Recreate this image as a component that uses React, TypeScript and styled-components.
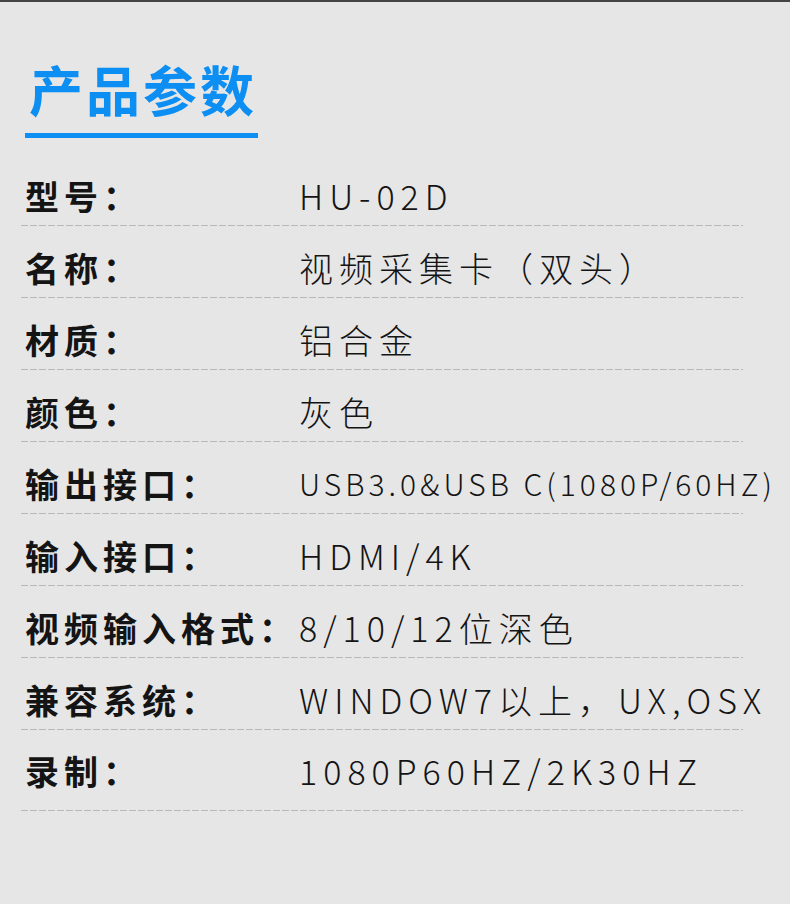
import React from "react";
import styled, { createGlobalStyle } from "styled-components";

const Global = createGlobalStyle`
  html, body { margin: 0; padding: 0; background: #e6e6e6; }
  body { font-family: "Noto Sans CJK SC", "Noto Sans", sans-serif; }
`;

const Page = styled.div`
  width: 790px;
  height: 904px;
  box-sizing: border-box;
  border-top: 2px solid #444;
  background: #e6e6e6;
  overflow: hidden;
`;

const Header = styled.header`
  padding: 57px 0 0 25px;
  display: flex;
  flex-direction: column;
  align-items: flex-start;
`;

const Title = styled.h1`
  margin: 0 0 0 4px;
  font-size: 54px;
  line-height: 60px;
  font-weight: 700;
  letter-spacing: 3px;
  color: #0c8ef2;
`;

const TitleBar = styled.div`
  margin-top: 14px;
  width: 233px;
  height: 5px;
  background: #0c8ef2;
`;

const List = styled.dl`
  margin: 16px 0 0 21px;
  width: 722px;
  padding: 0;
`;

const Row = styled.div`
  display: flex;
  align-items: center;
  height: 72px;
  box-sizing: border-box;
  padding-top: 10px;
  background-image: repeating-linear-gradient(
    90deg,
    #b9b9b9 0 7px,
    transparent 7px 9px
  );
  background-size: 100% 1px;
  background-repeat: no-repeat;
  background-position: left bottom;

  &:last-child {
    height: 81px;
    padding-top: 0;
  }
`;

const Label = styled.dt`
  flex: 0 0 278px;
  padding-left: 4px;
  box-sizing: border-box;
  font-size: 34px;
  font-weight: 700;
  letter-spacing: 5px;
  color: #141414;
  white-space: nowrap;
`;

const Value = styled.dd<{ $size: number; $spacing: number }>`
  margin: 0;
  font-size: ${(p) => p.$size}px;
  font-weight: 300;
  letter-spacing: ${(p) => p.$spacing}px;
  color: #141414;
  white-space: nowrap;
`;

const specs: { label: string; value: string; size?: number; spacing?: number }[] = [
  { label: "型号：", value: "HU-02D" },
  { label: "名称：", value: "视频采集卡（双头）" },
  { label: "材质：", value: "铝合金" },
  { label: "颜色：", value: "灰色" },
  { label: "输出接口：", value: "USB3.0&USB C(1080P/60HZ)", size: 30, spacing: 4 },
  { label: "输入接口：", value: "HDMI/4K" },
  { label: "视频输入格式：", value: "8/10/12位深色" },
  { label: "兼容系统：", value: "WINDOW7以上，UX,OSX" },
  { label: "录制：", value: "1080P60HZ/2K30HZ" },
];

export default function App() {
  return (
    <Page>
      <Global />
      <Header>
        <Title>产品参数</Title>
        <TitleBar />
      </Header>
      <List>
        {specs.map((s) => (
          <Row key={s.label}>
            <Label>{s.label}</Label>
            <Value $size={s.size ?? 34} $spacing={s.spacing ?? 6}>
              {s.value}
            </Value>
          </Row>
        ))}
      </List>
    </Page>
  );
}
